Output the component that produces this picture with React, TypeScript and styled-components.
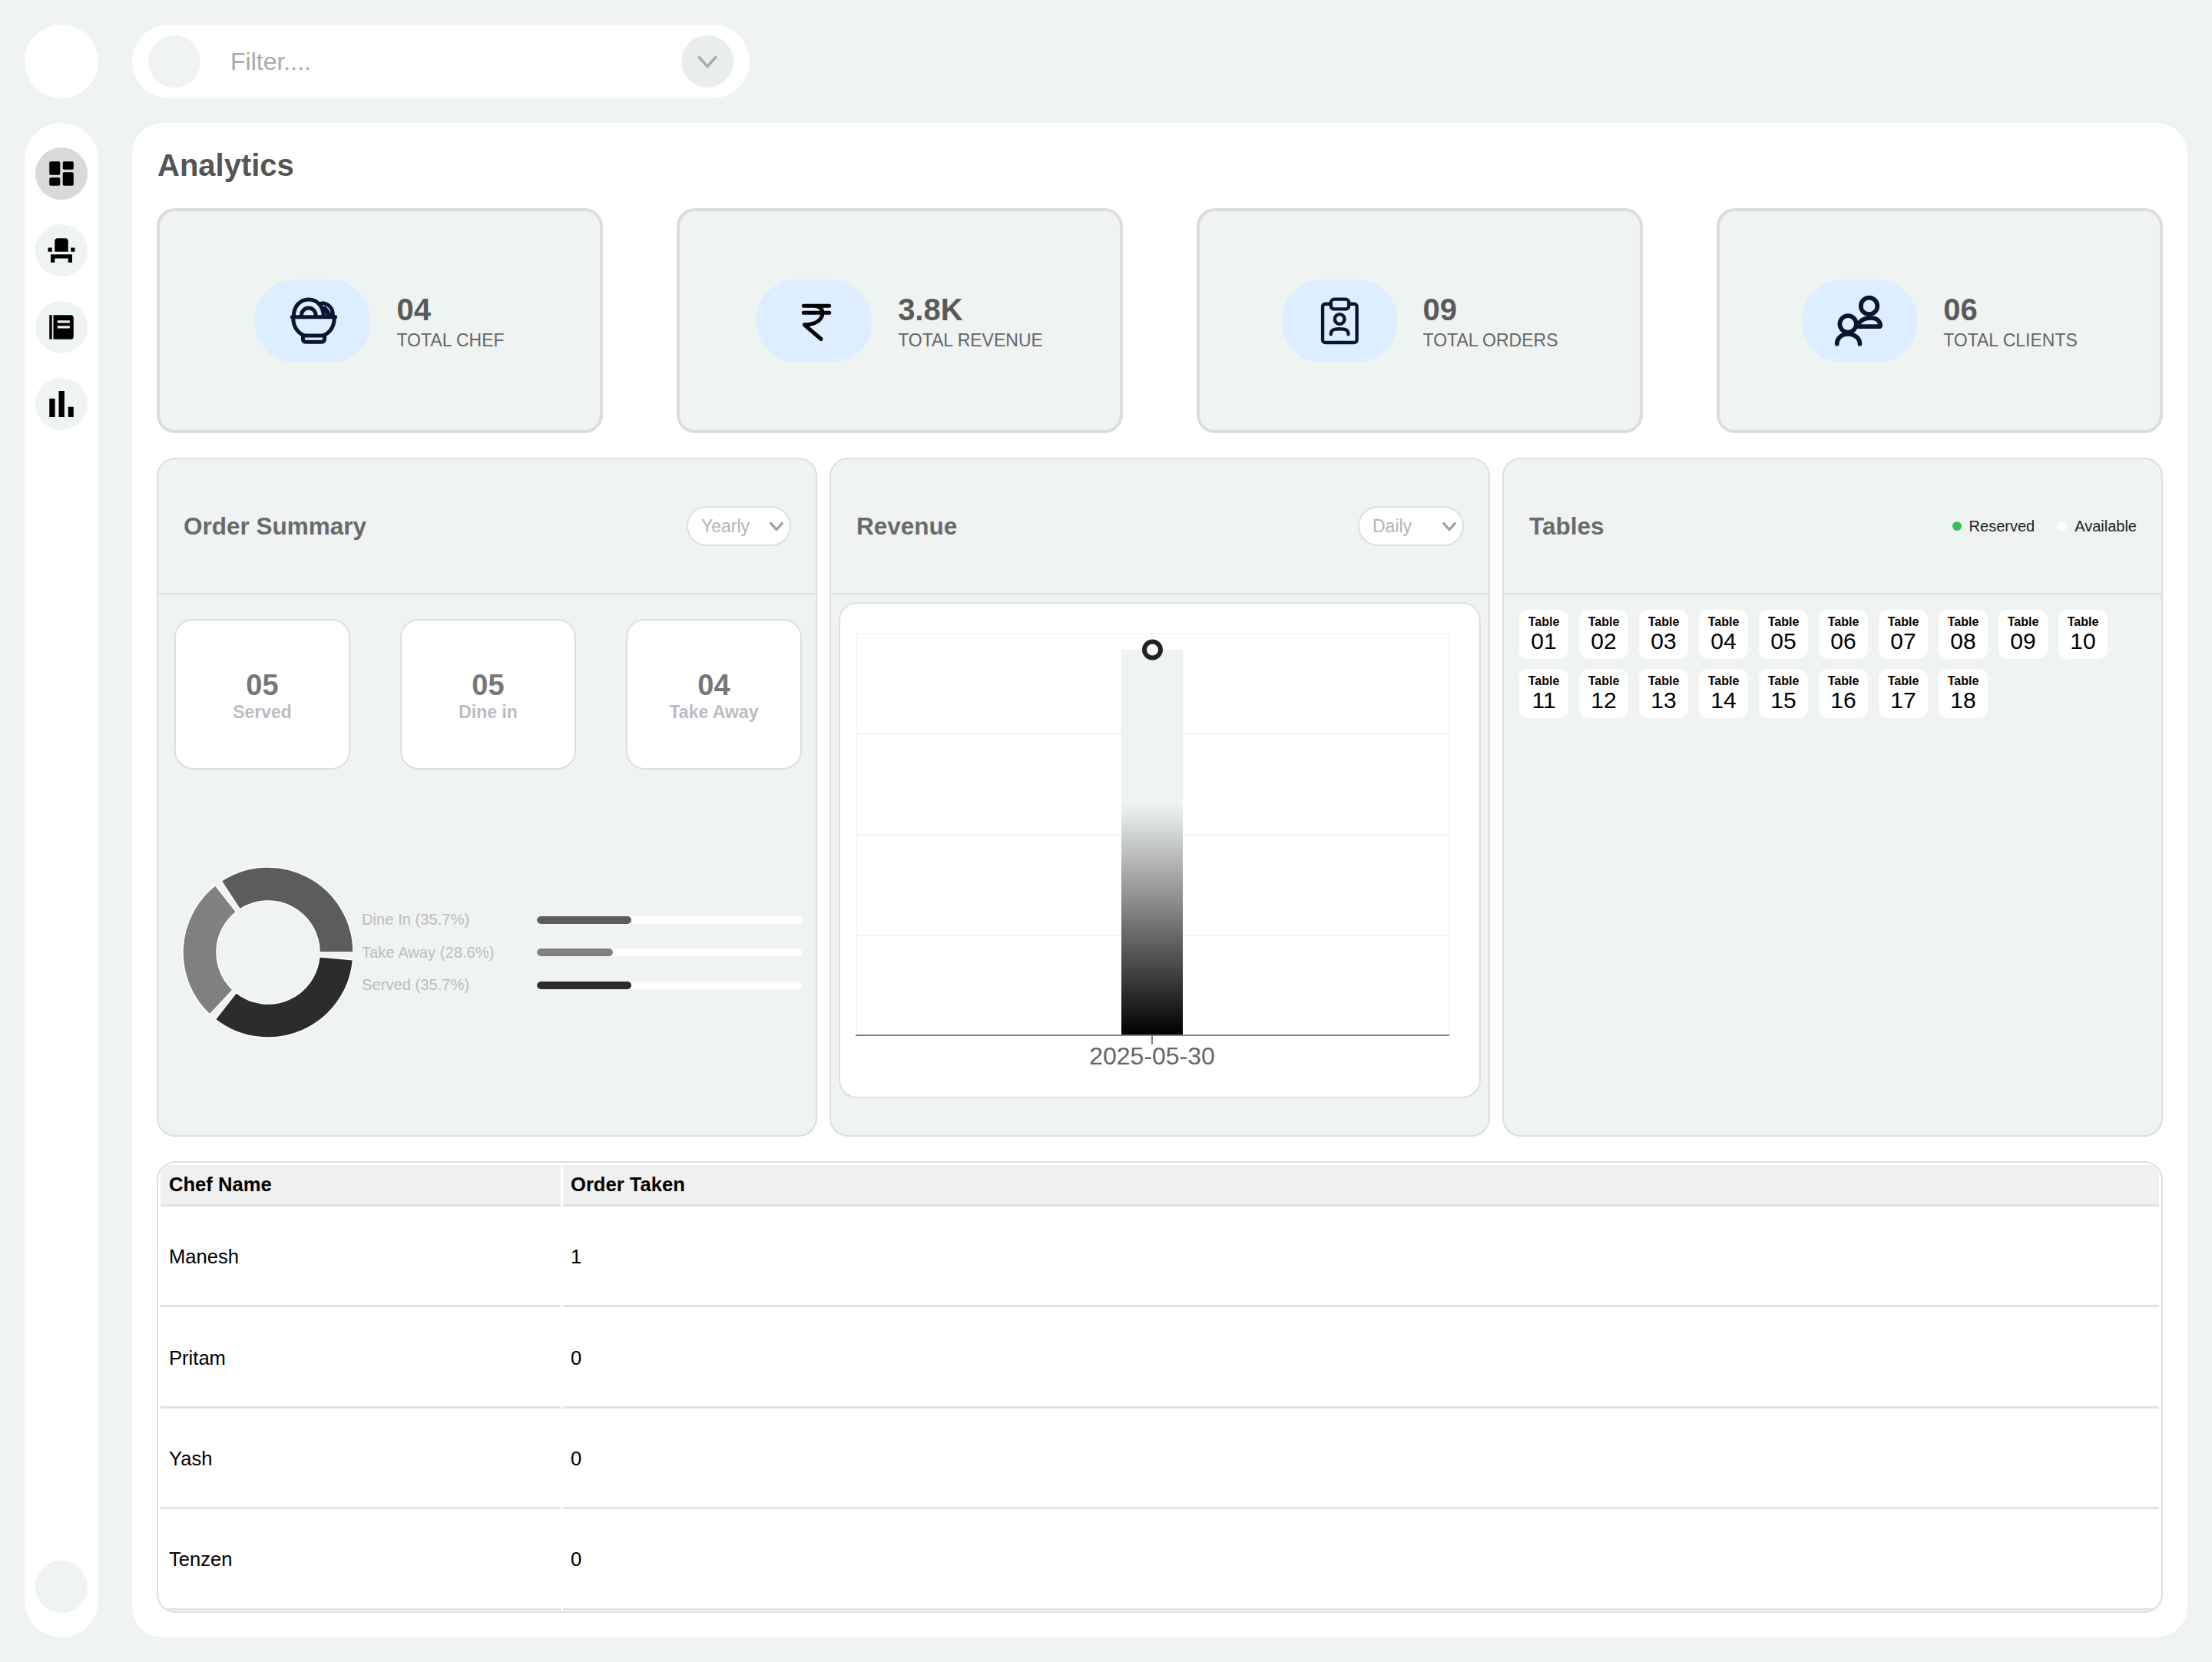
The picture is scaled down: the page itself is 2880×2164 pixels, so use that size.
import React from 'react';
import styled, { createGlobalStyle } from 'styled-components';
import { MdEventSeat } from 'react-icons/md';

const GlobalStyle = createGlobalStyle`
  html, body {
    margin: 0;
    padding: 0;
    background: #eff3f2;
  }
  * {
    box-sizing: border-box;
  }
  body {
    font-family: "Liberation Sans", Arial, sans-serif;
  }
`;

const NAVY = '#0b1531';

const BowlIcon = () => (
  <svg width="67" height="67" viewBox="167 132 200 200" fill="none" stroke={NAVY} strokeWidth="15" strokeLinecap="round" strokeLinejoin="round">
    <path d="M186 218H354" />
    <path d="M190 220C190 262 215 285 235 290H305C325 285 350 262 350 220" />
    <path d="M228 292V302Q228 315 242 315H298Q312 315 312 302V292" />
    <path d="M192 215C192 178 215 150 250 150C285 150 308 178 308 215" />
    <path d="M222 212C222 195 235 183 250 183C265 183 278 195 278 212" />
    <path d="M292 168C310 158 345 170 345 215" />
    <path d="M312 185L330 210" strokeWidth="20" />
  </svg>
);

const RupeeIcon = () => (
  <svg width="64" height="64" viewBox="-3 1.5 192 192" fill="none" stroke="#000" strokeWidth="15" strokeLinecap="round" strokeLinejoin="round">
    <path d="M52 38H152" />
    <path d="M52 65H152" />
    <path d="M98 38C118 40 128 55 125 72C122 95 95 112 55 112L120 168" />
  </svg>
);

const BoardIcon = () => (
  <svg width="67" height="67" viewBox="156 132 200 200" fill="none" stroke={NAVY} strokeWidth="13" strokeLinecap="round" strokeLinejoin="round">
    <rect x="192" y="167" width="133" height="150" rx="10" />
    <rect x="224" y="149" width="70" height="38" rx="13" fill="#dceeff" />
    <circle cx="258" cy="226" r="19" />
    <path d="M224 285C224 268 235 264 258 264C281 264 292 268 292 285" />
  </svg>
);

const UsersIcon = () => (
  <svg width="67" height="67" viewBox="176 132 200 200" fill="none" stroke={NAVY} strokeWidth="17" strokeLinecap="round" strokeLinejoin="round">
    <circle cx="312" cy="175" r="32" />
    <path d="M276 238C290 220 332 215 348 232C354 240 358 250 354 255H272" />
    <circle cx="230" cy="245" r="32" />
    <path d="M187 322C187 300 205 284 230 284C255 284 276 300 276 322" />
  </svg>
);

const DashboardIcon = () => (
  <svg width="42" height="42" viewBox="0 0 24 24" fill="#000">
    <path d="M4 13h6c.55 0 1-.45 1-1V4c0-.55-.45-1-1-1H4c-.55 0-1 .45-1 1v8c0 .55.45 1 1 1zm0 8h6c.55 0 1-.45 1-1v-4c0-.55-.45-1-1-1H4c-.55 0-1 .45-1 1v4c0 .55.45 1 1 1zm10 0h6c.55 0 1-.45 1-1v-8c0-.55-.45-1-1-1h-6c-.55 0-1 .45-1 1v8c0 .55.45 1 1 1zM13 4v4c0 .55.45 1 1 1h6c.55 0 1-.45 1-1V4c0-.55-.45-1-1-1h-6c-.55 0-1 .45-1 1z" />
  </svg>
);

const NotebookIcon = () => (
  <svg width="42" height="42" viewBox="0 0 24 24" fill="#000" fillRule="evenodd">
    <path d="M3 3h2v18H3z" />
    <path d="M6 3h13a2 2 0 0 1 2 2v14a2 2 0 0 1-2 2H6zM9 7v1.900h9.200V7zM9 11v1.900h9.200V11z" />
  </svg>
);

const BarsIcon = () => (
  <svg width="42" height="42" viewBox="0 0 24 24" fill="#000">
    <path d="M3 8h4.200v13.700H3zM10 2.300h4.200v19.400H10zM17 14.100h4v7.600h-4z" />
  </svg>
);

const Chevron = ({ size, color, weight = 3.5 }: { size: number; color: string; weight?: number }) => (
  <svg width={size} height={size} viewBox="0 0 24 24" fill="none" stroke={color} strokeWidth={weight} strokeLinecap="round" strokeLinejoin="round">
    <path d="M4 8l8 9 8-9" />
  </svg>
);

// donut arcs are in degrees, counter-clockwise from 3 o'clock
const CX = 120;
const CY = 120;
const arcPath = (from: number, to: number, outer = 111, inner = 67) => {
  const pt = (r: number, a: number) => {
    const rad = (a * Math.PI) / 180;
    return `${(CX + r * Math.cos(rad)).toFixed(2)} ${(CY - r * Math.sin(rad)).toFixed(2)}`;
  };
  const large = to - from > 180 ? 1 : 0;
  return `M${pt(outer, from)}A${outer} ${outer} 0 ${large} 0 ${pt(outer, to)}L${pt(inner, to)}A${inner} ${inner} 0 ${large} 1 ${pt(inner, from)}Z`;
};

const slices = [
  { label: 'Dine In (35.7%)', pct: 35.7, color: '#5c5c5c', from: 0, to: 123.2 },
  { label: 'Take Away (28.6%)', pct: 28.6, color: '#808080', from: 128.2, to: 226.8 },
  { label: 'Served (35.7%)', pct: 35.7, color: '#2c2c2c', from: 231.8, to: 355 },
];

const stats = [
  { value: '04', label: 'TOTAL CHEF', icon: <BowlIcon /> },
  { value: '3.8K', label: 'TOTAL REVENUE', icon: <RupeeIcon /> },
  { value: '09', label: 'TOTAL ORDERS', icon: <BoardIcon /> },
  { value: '06', label: 'TOTAL CLIENTS', icon: <UsersIcon /> },
];

const summary = [
  { value: '05', label: 'Served' },
  { value: '05', label: 'Dine in' },
  { value: '04', label: 'Take Away' },
];

const chefs = [
  { name: 'Manesh', orders: 1 },
  { name: 'Pritam', orders: 0 },
  { name: 'Yash', orders: 0 },
  { name: 'Tenzen', orders: 0 },
];

const tableNumbers = Array.from({ length: 18 }, (_, i) => String(i + 1).padStart(2, '0'));

const RevenueChart = () => (
  <ChartSvg viewBox="1095 786 830 642">
    <defs>
      <linearGradient id="revenueBar" x1="0" y1="0" x2="0" y2="1">
        <stop offset="0.4" stopColor="#eff3f2" />
        <stop offset="1" stopColor="#000" />
      </linearGradient>
    </defs>
    <g stroke="#f5f5f5" strokeWidth="2" fill="none">
      <path d="M1115 825H1887V1348M1115 825V1348M1115 956H1887M1115 1087H1887M1115 1218H1887M1500 825V1348" />
    </g>
    <rect x="1460" y="846" width="80" height="502" fill="url(#revenueBar)" />
    <path d="M1114 1348H1887M1500 1348V1360" stroke="#808080" strokeWidth="2" fill="none" />
    <circle cx="1500.500" cy="846" r="10.500" fill="#fff" stroke="#222" strokeWidth="6" />
    <text x="1500" y="1386" textAnchor="middle" fontSize="32" fill="#666" fontFamily="Liberation Sans, Arial, sans-serif">
      2025-05-30
    </text>
  </ChartSvg>
);

export default function App() {
  return (
    <>
      <GlobalStyle />
      <Page>
        <Logo />
        <FilterBar>
          <FilterAvatar />
          <FilterInput placeholder="Filter...." />
          <FilterToggle>
            <Chevron size={32} color="#a9a9ae" weight={2.6} />
          </FilterToggle>
        </FilterBar>
        <Sidebar>
          <NavItem $active>
            <DashboardIcon />
          </NavItem>
          <NavItem>
            <MdEventSeat size={42} color="#000" />
          </NavItem>
          <NavItem>
            <NotebookIcon />
          </NavItem>
          <NavItem>
            <BarsIcon />
          </NavItem>
          <NavSpacer />
          <NavItem />
        </Sidebar>
        <Main>
          <PageTitle>Analytics</PageTitle>
          <StatsRow>
            {stats.map((s) => (
              <StatCard key={s.label}>
                <StatIcon>{s.icon}</StatIcon>
                <StatText>
                  <StatValue>{s.value}</StatValue>
                  <StatLabel>{s.label}</StatLabel>
                </StatText>
              </StatCard>
            ))}
          </StatsRow>
          <PanelsRow>
            <Panel>
              <PanelHeader>
                <PanelTitle>Order Summary</PanelTitle>
                <PeriodSelect>
                  Yearly
                  <Chevron size={22} color="#a0a0a6" />
                </PeriodSelect>
              </PanelHeader>
              <SummaryRow>
                {summary.map((s) => (
                  <SummaryCard key={s.label}>
                    <SummaryValue>{s.value}</SummaryValue>
                    <SummaryLabel>{s.label}</SummaryLabel>
                  </SummaryCard>
                ))}
              </SummaryRow>
              <DonutRow>
                <svg width="240" height="240" viewBox="0 0 240 240">
                  {slices.map((s) => (
                    <path key={s.label} d={arcPath(s.from, s.to)} fill={s.color} stroke="#fff" strokeWidth="1.500" />
                  ))}
                </svg>
                <Legend>
                  {slices.map((s) => (
                    <React.Fragment key={s.label}>
                      <LegendText>{s.label}</LegendText>
                      <BarTrack>
                        <BarFill $color={s.color} style={{ width: `${s.pct}%` }} />
                      </BarTrack>
                    </React.Fragment>
                  ))}
                </Legend>
              </DonutRow>
            </Panel>
            <Panel>
              <PanelHeader>
                <PanelTitle>Revenue</PanelTitle>
                <PeriodSelect $wide>
                  Daily
                  <Chevron size={22} color="#a0a0a6" />
                </PeriodSelect>
              </PanelHeader>
              <ChartCard>
                <RevenueChart />
              </ChartCard>
            </Panel>
            <Panel>
              <PanelHeader>
                <PanelTitle>Tables</PanelTitle>
                <TableLegend>
                  <LegendDot $color="#34c05c" />
                  <span>Reserved</span>
                  <LegendDot $color="#fff" $spaced />
                  <span>Available</span>
                </TableLegend>
              </PanelHeader>
              <TableGrid>
                {tableNumbers.map((n) => (
                  <TableTile key={n}>
                    <TileCaption>Table</TileCaption>
                    <TileNumber>{n}</TileNumber>
                  </TableTile>
                ))}
              </TableGrid>
            </Panel>
          </PanelsRow>
          <ChefTableWrap>
            <ChefTable>
              <thead>
                <tr>
                  <HeadCell>Chef Name</HeadCell>
                  <HeadCell>Order Taken</HeadCell>
                </tr>
              </thead>
              <tbody>
                {chefs.map((c) => (
                  <tr key={c.name}>
                    <BodyCell>{c.name}</BodyCell>
                    <BodyCell>{c.orders}</BodyCell>
                  </tr>
                ))}
              </tbody>
            </ChefTable>
          </ChefTableWrap>
        </Main>
      </Page>
    </>
  );
}

const Page = styled.div`
  display: grid;
  grid-template-columns: 96px 1fr;
  grid-template-rows: 96px 1972px;
  gap: 32px 44px;
  width: 2880px;
  height: 2164px;
  padding: 32px;
  background: #eff3f2;
`;

const Logo = styled.div`
  width: 96px;
  height: 96px;
  border-radius: 50%;
  background: #fff;
`;

const FilterBar = styled.div`
  display: flex;
  align-items: center;
  width: 804px;
  height: 96px;
  padding: 0 21px;
  border-radius: 48px;
  background: #fff;
`;

const FilterAvatar = styled.div`
  flex: none;
  width: 68px;
  height: 68px;
  border-radius: 50%;
  background: #eff3f2;
`;

const FilterInput = styled.input`
  flex: 1;
  min-width: 0;
  margin-left: 39px;
  padding: 0;
  border: 0;
  outline: 0;
  background: transparent;
  font-family: "Liberation Sans", Arial, sans-serif;
  font-size: 32px;
  &::placeholder {
    color: #a9a9ae;
    opacity: 1;
  }
`;

const FilterToggle = styled.div`
  flex: none;
  display: flex;
  align-items: center;
  justify-content: center;
  width: 68px;
  height: 68px;
  border-radius: 50%;
  background: #e9edec;
`;

const Sidebar = styled.nav`
  display: flex;
  flex-direction: column;
  align-items: center;
  gap: 32px;
  padding: 32px 0;
  border-radius: 48px;
  background: #fff;
`;

const NavItem = styled.div<{ $active?: boolean }>`
  flex: none;
  display: flex;
  align-items: center;
  justify-content: center;
  width: 68px;
  height: 68px;
  border-radius: 50%;
  background: ${(p) => (p.$active ? '#d9d9d9' : '#eff3f2')};
`;

const NavSpacer = styled.div`
  flex: 1;
`;

const Main = styled.main`
  display: flex;
  flex-direction: column;
  min-width: 0;
  min-height: 0;
  padding: 32px;
  border-radius: 40px;
  background: #fff;
`;

const PageTitle = styled.h1`
  margin: 0 0 33px;
  padding-left: 1px;
  font-size: 40px;
  line-height: 46px;
  font-weight: 700;
  color: #555;
`;

const StatsRow = styled.section`
  display: grid;
  grid-template-columns: repeat(4, 1fr);
  gap: 96px;
  height: 293px;
`;

const StatCard = styled.div`
  display: flex;
  align-items: center;
  justify-content: center;
  gap: 34px;
  border: 4px solid #dcdcdc;
  border-radius: 24px;
  background: #eff3f2;
`;

const StatIcon = styled.div`
  display: flex;
  align-items: center;
  justify-content: center;
  width: 150px;
  height: 108px;
  border-radius: 52px;
  background: #dceeff;
`;

const StatText = styled.div`
  padding-top: 2px;
`;

const StatValue = styled.div`
  font-size: 40px;
  line-height: 46px;
  font-weight: 700;
  color: #5a5a5a;
`;

const StatLabel = styled.div`
  margin-top: 3px;
  font-size: 23px;
  line-height: 28px;
  color: #666;
`;

const PanelsRow = styled.section`
  display: grid;
  grid-template-columns: repeat(3, 1fr);
  gap: 16px;
  height: 884px;
  margin-top: 32px;
`;

const Panel = styled.div`
  display: flex;
  flex-direction: column;
  border: 2px solid #dcdfdf;
  border-radius: 24px;
  background: #eff3f2;
`;

const PanelHeader = styled.header`
  flex: none;
  display: flex;
  align-items: center;
  justify-content: space-between;
  height: 176px;
  padding: 0 32px 0 33px;
  border-bottom: 2px solid #dcdfdf;
`;

const PanelTitle = styled.h2`
  margin: 0;
  font-size: 31.5px;
  font-weight: 700;
  color: #6a6a6a;
`;

const PeriodSelect = styled.div<{ $wide?: boolean }>`
  display: flex;
  align-items: center;
  justify-content: space-between;
  width: ${(p) => (p.$wide ? '138px' : '136px')};
  height: 52px;
  padding: 0 6px 0 17px;
  border: 2px solid #dddfe0;
  border-radius: 26px;
  background: #fff;
  font-size: 23px;
  color: #b4b4ba;
`;

const SummaryRow = styled.div`
  display: flex;
  justify-content: space-between;
  padding: 32px 18px 0 21px;
`;

const SummaryCard = styled.div`
  display: flex;
  flex-direction: column;
  align-items: center;
  justify-content: center;
  width: 229px;
  height: 196px;
  padding-top: 1px;
  border: 2px solid #dddfe0;
  border-radius: 24px;
  background: #fff;
`;

const SummaryValue = styled.div`
  font-size: 38px;
  line-height: 44px;
  font-weight: 700;
  color: #777;
`;

const SummaryLabel = styled.div`
  font-size: 23px;
  line-height: 26px;
  font-weight: 700;
  color: #bcbcc2;
`;

const DonutRow = styled.div`
  display: flex;
  align-items: center;
  gap: 2px;
  margin-top: 118px;
  padding: 0 18px 0 23px;
`;

const Legend = styled.div`
  display: grid;
  grid-template-columns: 228px 345px;
  grid-auto-rows: 42.5px;
  align-items: center;
`;

const LegendText = styled.span`
  font-size: 20.2px;
  color: #bcbcc2;
`;

const BarTrack = styled.div`
  height: 10px;
  border-radius: 5px;
  background: #fff;
  overflow: hidden;
`;

const BarFill = styled.div<{ $color: string }>`
  height: 100%;
  border-radius: 5px;
  background: ${(p) => p.$color};
`;

const ChartCard = styled.div`
  height: 646px;
  margin: 10px 10px 0;
  border: 2px solid #dddfe0;
  border-radius: 24px;
  background: #fff;
`;

const ChartSvg = styled.svg`
  display: block;
  width: 100%;
  height: 100%;
`;

const TableLegend = styled.div`
  display: flex;
  align-items: center;
  font-size: 20px;
  color: #222;
`;

const LegendDot = styled.i<{ $color: string; $spaced?: boolean }>`
  width: 12px;
  height: 12px;
  margin-left: ${(p) => (p.$spaced ? '30px' : '0')};
  margin-right: 10px;
  border-radius: 50%;
  background: ${(p) => p.$color};
`;

const TableGrid = styled.div`
  display: grid;
  grid-template-columns: repeat(10, 64px);
  grid-auto-rows: 64px;
  gap: 13px 14px;
  padding: 20px 20px;
`;

const TableTile = styled.div`
  display: flex;
  flex-direction: column;
  align-items: center;
  justify-content: center;
  border-radius: 12px;
  background: #fff;
  color: #000;
`;

const TileCaption = styled.div`
  font-size: 16px;
  line-height: 18px;
  font-weight: 700;
`;

const TileNumber = styled.div`
  font-size: 30px;
  line-height: 32px;
`;

const ChefTableWrap = styled.div`
  height: 588px;
  margin-top: 32px;
  border: 2px solid #dddfe0;
  border-radius: 24px;
  overflow: hidden;
`;

const ChefTable = styled.table`
  width: 100%;
  border-collapse: separate;
  border-spacing: 3px;
  table-layout: fixed;
  font-size: 25.6px;
  color: #000;
  th:first-child,
  td:first-child {
    width: 521px;
    padding-left: 11px;
  }
`;

const HeadCell = styled.th`
  height: 54px;
  padding: 0 10px;
  border-bottom: 3px solid #e2e2e2;
  background: #f0f0f0;
  text-align: left;
  font-weight: 700;
`;

const BodyCell = styled.td`
  height: 128.4px;
  padding: 0 10px;
  border-bottom: 3px solid #e2e2e2;
`;
